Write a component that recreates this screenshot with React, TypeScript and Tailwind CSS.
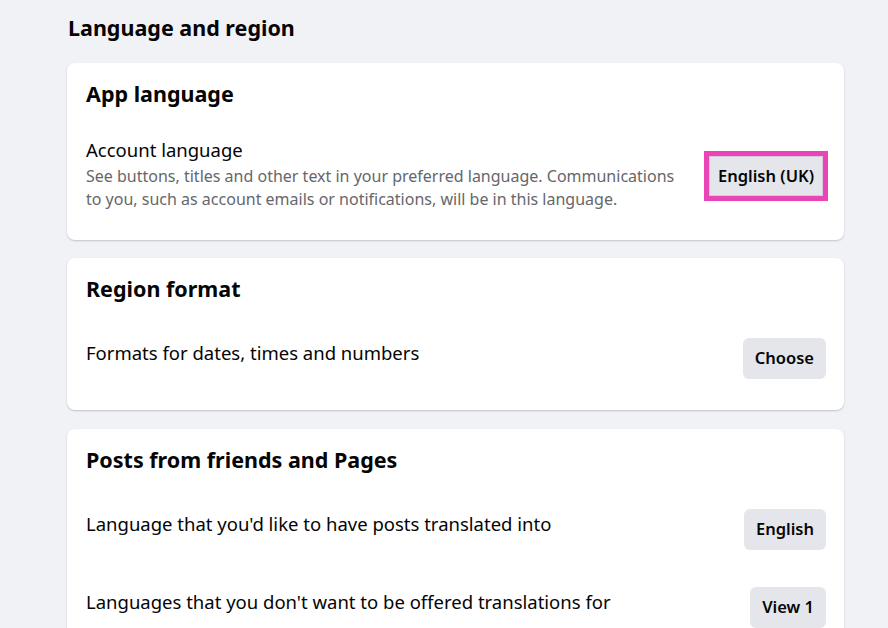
import React from 'react';

const font = { fontFamily: '"Noto Sans", "Open Sans", sans-serif' };

const GrayButton: React.FC<{ label: string; className?: string }> = ({ label, className = '' }) => (
  <button
    className={`h-[41px] shrink-0 rounded-md bg-[#e4e6eb] px-3 text-[16.5px] font-semibold text-[#050505] ${className}`}
  >
    {label}
  </button>
);

const Row: React.FC<{ text: string; button: string; className?: string }> = ({ text, button, className = '' }) => (
  <div className={`flex items-start justify-between ${className}`}>
    <p className="mt-1 text-[18.5px] leading-[22px] text-[#050505]">{text}</p>
    <GrayButton label={button} />
  </div>
);

const Card: React.FC<{ title: string; children: React.ReactNode; className?: string }> = ({ title, children, className = '' }) => (
  <section className={`rounded-lg bg-white pl-[19px] pr-[18px] pt-4 shadow-[0_1px_2px_rgba(0,0,0,0.2)] ${className}`}>
    <h2 className="text-[21.5px] font-bold leading-[30px] text-[#050505]">{title}</h2>
    {children}
  </section>
);

const App: React.FC = () => {
  return (
    <div className="min-h-screen bg-[#f0f2f5] pl-[67px] pr-[44px]" style={font}>
      <div className="w-[777px]">
        <h1 className="pt-[13px] pl-px text-[21.5px] font-bold leading-[30px] text-[#050505]">Language and region</h1>

        {/* App language */}
        <Card title="App language" className="mt-[20px] pb-[29px]">
          <div className="mt-[30px] flex items-center justify-between">
            <div>
              <p className="text-[18.5px] leading-[22px] text-[#050505]">Account language</p>
              <p className="mt-[4px] text-[16px] leading-[23px] text-[#65676b]">
                See buttons, titles and other text in your preferred language. Communications
                <br />
                to you, such as account emails or notifications, will be in this language.
              </p>
            </div>
            <div className="mr-[-2px] mt-[2px] border-[5px] border-[#ea45b6] p-0">
              <button className="h-[40px] border border-[#d6c9dc] bg-[#e4e6eb] px-[8px] text-[16.5px] font-semibold text-[#050505]">
                English (UK)
              </button>
            </div>
          </div>
        </Card>

        {/* Region format */}
        <Card title="Region format" className="mt-[18px] pb-[31px]">
          <Row text="Formats for dates, times and numbers" button="Choose" className="mt-[34px]" />
        </Card>

        {/* Posts */}
        <Card title="Posts from friends and Pages" className="mt-[19px] pb-[31px]">
          <Row text="Language that you'd like to have posts translated into" button="English" className="mt-[34px]" />
          <Row text="Languages that you don't want to be offered translations for" button="View 1" className="mt-[37px]" />
        </Card>
      </div>
    </div>
  );
};

export default App;
